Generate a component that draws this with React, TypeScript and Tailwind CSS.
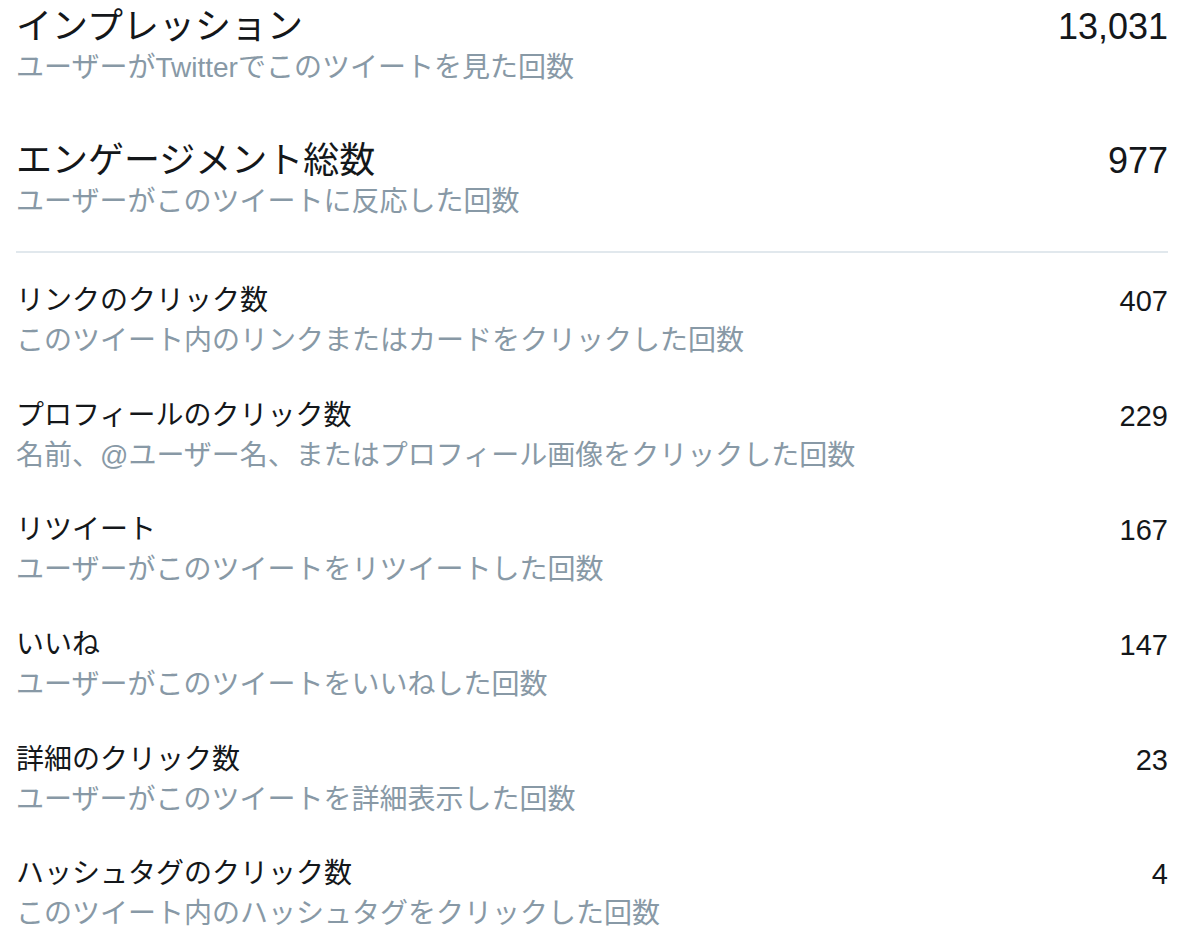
import React from "react";

const items = [
  { t: "リンクのクリック数", s: "このツイート内のリンクまたはカードをクリックした回数", v: "407" },
  { t: "プロフィールのクリック数", s: "名前、@ユーザー名、またはプロフィール画像をクリックした回数", v: "229" },
  { t: "リツイート", s: "ユーザーがこのツイートをリツイートした回数", v: "167" },
  { t: "いいね", s: "ユーザーがこのツイートをいいねした回数", v: "147" },
  { t: "詳細のクリック数", s: "ユーザーがこのツイートを詳細表示した回数", v: "23" },
  { t: "ハッシュタグのクリック数", s: "このツイート内のハッシュタグをクリックした回数", v: "4" },
];

const font = { fontFamily: '"Liberation Sans", "Noto Sans CJK JP", sans-serif' };

export default function App() {
  return (
    <div
      className="bg-white w-[1182px] h-[940px] overflow-hidden pl-4 pr-[14px] pt-[6px]"
      style={font}
    >
      <div className="flex justify-between items-start">
        <div className="flex flex-col">
          <div className="text-[36px] leading-[42px] text-[#14171a]">インプレッション</div>
          <div className="text-[28px] leading-[40px] text-[#8899a6]">ユーザーがTwitterでこのツイートを見た回数</div>
        </div>
        <div className="text-[36px] leading-[42px] text-[#14171a]">13,031</div>
      </div>
      <div className="flex justify-between items-start mt-[52px]">
        <div className="flex flex-col">
          <div className="text-[36px] leading-[42px] text-[#14171a]">エンゲージメント総数</div>
          <div className="text-[28px] leading-[40px] text-[#8899a6]">ユーザーがこのツイートに反応した回数</div>
        </div>
        <div className="text-[36px] leading-[42px] text-[#14171a]">977</div>
      </div>
      <div className="h-[2px] bg-[#e1e8ed] mt-[29px]" />
      <div className="flex flex-col gap-[34.7px] mt-[28px]">
        {items.map((it) => (
          <div key={it.t} className="flex justify-between items-start">
            <div className="flex flex-col">
              <div className="text-[28px] leading-[40px] text-[#14171a]">{it.t}</div>
              <div className="text-[28px] leading-[40px] text-[#8899a6]">{it.s}</div>
            </div>
            <div className="text-[29px] leading-[40px] text-[#14171a]">{it.v}</div>
          </div>
        ))}
      </div>
    </div>
  );
}
